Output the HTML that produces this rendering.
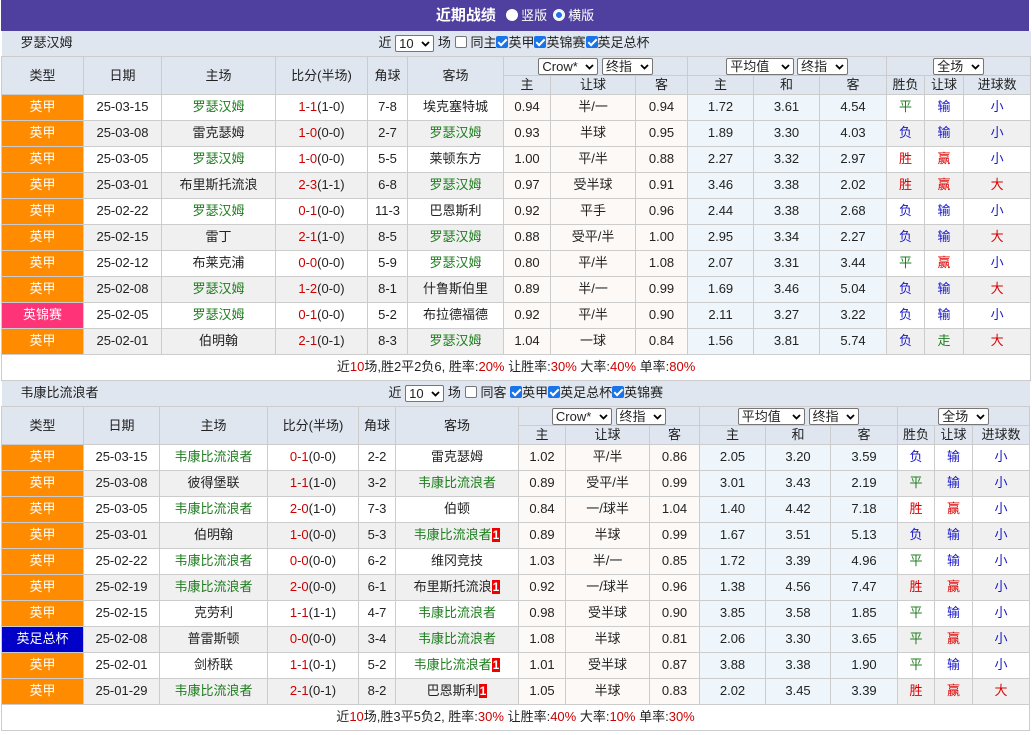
<!DOCTYPE html>
<html><head><meta charset="utf-8">
<style>
*{margin:0;padding:0;box-sizing:border-box}
body{width:1032px;height:735px;background:#fff;font-family:"Liberation Sans","Noto Sans CJK SC",sans-serif;font-size:13px;color:#222;position:relative;overflow:hidden}
.title{position:absolute;left:1px;top:0;width:1028px;height:31px;background:#4f3f9e;color:#fff;font-weight:bold;font-size:15px;text-align:center;line-height:31px}
.title .r{font-weight:normal;font-size:13px}
.rad{display:inline-block;width:12px;height:12px;border-radius:50%;background:#fff;vertical-align:-1px;margin:0 3px 0 6px}
.rad.on{border:1px solid #fff;background:#1a73e8;box-shadow:inset 0 0 0 2px #fff}
table{position:absolute;left:1px;width:1028px;border-collapse:collapse;table-layout:fixed}
td{border:1px solid #ccc;text-align:center;height:26px;padding:0;white-space:nowrap;overflow:hidden;line-height:16px}
.bar td{background:#dfe6ef;border:none;height:25px;text-align:left}
.bar .nm{padding-left:19px}
.hd td{background:#dfe6ef;height:19px;line-height:17px}
tr.g td{background:#f0f0f0}
td.y{color:#fff!important;background:#ff8c00!important}
td.p{color:#fff!important;background:#ff3377!important}
td.b{color:#fff!important;background:#0000c8!important}
tr td.o{background:#fdf9f6}
tr td.a{background:#eef6fb}
.gr{color:#1e7e1e}
.rd{color:#d00}
.bl{color:#1818c8}
.sc{color:#c00}
.rc{background:#e00;color:#fff;font-weight:bold;padding:0 1px;font-size:12px}
.sel{display:inline-block;background:#fff;border:1px solid #767676;border-radius:2px;height:17px;line-height:15px;padding:0 3px;font-size:13px;vertical-align:middle;text-align:left}
.sel svg{vertical-align:1px;margin-left:4px}
.cb{display:inline-block;width:12px;height:12px;border-radius:2px;background:#1a73e8;vertical-align:-1px;position:relative}
.cb:after{content:"";position:absolute;left:4px;top:1px;width:3px;height:7px;border:solid #fff;border-width:0 2px 2px 0;transform:rotate(45deg)}
.cbo{display:inline-block;width:12px;height:12px;border:1px solid #767676;border-radius:2px;background:#fff;vertical-align:-1px;margin-left:4px}
.ft td{height:26px;background:#fff}
</style></head><body>
<div class="title">近期战绩 <span class="r"><span class="rad"></span>竖版<span class="rad on"></span>横版</span></div>

<table style="top:31px">
<colgroup><col style="width:82px"><col style="width:78px"><col style="width:114px"><col style="width:92px"><col style="width:40px"><col style="width:96px"><col style="width:47px"><col style="width:85px"><col style="width:52px"><col style="width:66px"><col style="width:66px"><col style="width:67px"><col style="width:38px"><col style="width:39px"><col style="width:67px"></colgroup>
<tr class="bar"><td colspan="4" class="nm">罗瑟汉姆</td><td colspan="11" style="padding-left:11px">近 <span class="sel">10 <svg width="9" height="6"><path d="M1 1l3.5 3.5L8 1" stroke="#000" stroke-width="1.8" fill="none"/></svg></span> 场<span class="cbo"></span> 同主<span class="cb"></span>英甲<span class="cb"></span>英锦赛<span class="cb"></span>英足总杯</td></tr>
<tr class="hd"><td rowspan="2">类型</td><td rowspan="2">日期</td><td rowspan="2">主场</td><td rowspan="2">比分(半场)</td><td rowspan="2">角球</td><td rowspan="2">客场</td><td colspan="3"><span class="sel">Crow* <svg width="9" height="6"><path d="M1 1l3.5 3.5L8 1" stroke="#000" stroke-width="1.8" fill="none"/></svg></span> <span class="sel">终指 <svg width="9" height="6"><path d="M1 1l3.5 3.5L8 1" stroke="#000" stroke-width="1.8" fill="none"/></svg></span></td><td colspan="3"><span class="sel">平均值 &nbsp;<svg width="9" height="6"><path d="M1 1l3.5 3.5L8 1" stroke="#000" stroke-width="1.8" fill="none"/></svg></span> <span class="sel">终指 <svg width="9" height="6"><path d="M1 1l3.5 3.5L8 1" stroke="#000" stroke-width="1.8" fill="none"/></svg></span></td><td colspan="3"><span class="sel">全场 <svg width="9" height="6"><path d="M1 1l3.5 3.5L8 1" stroke="#000" stroke-width="1.8" fill="none"/></svg></span></td></tr>
<tr class="hd"><td>主</td><td>让球</td><td>客</td><td>主</td><td>和</td><td>客</td><td>胜负</td><td>让球</td><td>进球数</td></tr>
<tr><td class="y">英甲</td><td>25-03-15</td><td class="gr">罗瑟汉姆</td><td><span class="sc">1-1</span>(1-0)</td><td>7-8</td><td>埃克塞特城</td><td class="o">0.94</td><td class="o">半/一</td><td class="o">0.94</td><td class="a">1.72</td><td class="a">3.61</td><td class="a">4.54</td><td class="gr">平</td><td class="bl">输</td><td class="bl">小</td></tr>
<tr class="g"><td class="y">英甲</td><td>25-03-08</td><td>雷克瑟姆</td><td><span class="sc">1-0</span>(0-0)</td><td>2-7</td><td class="gr">罗瑟汉姆</td><td class="o">0.93</td><td class="o">半球</td><td class="o">0.95</td><td class="a">1.89</td><td class="a">3.30</td><td class="a">4.03</td><td class="bl">负</td><td class="bl">输</td><td class="bl">小</td></tr>
<tr><td class="y">英甲</td><td>25-03-05</td><td class="gr">罗瑟汉姆</td><td><span class="sc">1-0</span>(0-0)</td><td>5-5</td><td>莱顿东方</td><td class="o">1.00</td><td class="o">平/半</td><td class="o">0.88</td><td class="a">2.27</td><td class="a">3.32</td><td class="a">2.97</td><td class="rd">胜</td><td class="rd">赢</td><td class="bl">小</td></tr>
<tr class="g"><td class="y">英甲</td><td>25-03-01</td><td>布里斯托流浪</td><td><span class="sc">2-3</span>(1-1)</td><td>6-8</td><td class="gr">罗瑟汉姆</td><td class="o">0.97</td><td class="o">受半球</td><td class="o">0.91</td><td class="a">3.46</td><td class="a">3.38</td><td class="a">2.02</td><td class="rd">胜</td><td class="rd">赢</td><td class="rd">大</td></tr>
<tr><td class="y">英甲</td><td>25-02-22</td><td class="gr">罗瑟汉姆</td><td><span class="sc">0-1</span>(0-0)</td><td>11-3</td><td>巴恩斯利</td><td class="o">0.92</td><td class="o">平手</td><td class="o">0.96</td><td class="a">2.44</td><td class="a">3.38</td><td class="a">2.68</td><td class="bl">负</td><td class="bl">输</td><td class="bl">小</td></tr>
<tr class="g"><td class="y">英甲</td><td>25-02-15</td><td>雷丁</td><td><span class="sc">2-1</span>(1-0)</td><td>8-5</td><td class="gr">罗瑟汉姆</td><td class="o">0.88</td><td class="o">受平/半</td><td class="o">1.00</td><td class="a">2.95</td><td class="a">3.34</td><td class="a">2.27</td><td class="bl">负</td><td class="bl">输</td><td class="rd">大</td></tr>
<tr><td class="y">英甲</td><td>25-02-12</td><td>布莱克浦</td><td><span class="sc">0-0</span>(0-0)</td><td>5-9</td><td class="gr">罗瑟汉姆</td><td class="o">0.80</td><td class="o">平/半</td><td class="o">1.08</td><td class="a">2.07</td><td class="a">3.31</td><td class="a">3.44</td><td class="gr">平</td><td class="rd">赢</td><td class="bl">小</td></tr>
<tr class="g"><td class="y">英甲</td><td>25-02-08</td><td class="gr">罗瑟汉姆</td><td><span class="sc">1-2</span>(0-0)</td><td>8-1</td><td>什鲁斯伯里</td><td class="o">0.89</td><td class="o">半/一</td><td class="o">0.99</td><td class="a">1.69</td><td class="a">3.46</td><td class="a">5.04</td><td class="bl">负</td><td class="bl">输</td><td class="rd">大</td></tr>
<tr><td class="p">英锦赛</td><td>25-02-05</td><td class="gr">罗瑟汉姆</td><td><span class="sc">0-1</span>(0-0)</td><td>5-2</td><td>布拉德福德</td><td class="o">0.92</td><td class="o">平/半</td><td class="o">0.90</td><td class="a">2.11</td><td class="a">3.27</td><td class="a">3.22</td><td class="bl">负</td><td class="bl">输</td><td class="bl">小</td></tr>
<tr class="g"><td class="y">英甲</td><td>25-02-01</td><td>伯明翰</td><td><span class="sc">2-1</span>(0-1)</td><td>8-3</td><td class="gr">罗瑟汉姆</td><td class="o">1.04</td><td class="o">一球</td><td class="o">0.84</td><td class="a">1.56</td><td class="a">3.81</td><td class="a">5.74</td><td class="bl">负</td><td class="gr">走</td><td class="rd">大</td></tr>
<tr class="ft"><td colspan="15">近<span class="sc">10</span>场,胜2平2负6, 胜率:<span class="sc">20%</span> 让胜率:<span class="sc">30%</span> 大率:<span class="sc">40%</span> 单率:<span class="sc">80%</span></td></tr>
</table>

<table style="top:381px">
<colgroup><col style="width:82px"><col style="width:76px"><col style="width:108px"><col style="width:91px"><col style="width:37px"><col style="width:123px"><col style="width:47px"><col style="width:84px"><col style="width:50px"><col style="width:66px"><col style="width:65px"><col style="width:67px"><col style="width:37px"><col style="width:38px"><col style="width:57px"></colgroup>
<tr class="bar"><td colspan="4" class="nm" style="height:24px">韦康比流浪者</td><td colspan="11" style="padding-left:30px">近 <span class="sel">10 <svg width="9" height="6"><path d="M1 1l3.5 3.5L8 1" stroke="#000" stroke-width="1.8" fill="none"/></svg></span> 场<span class="cbo"></span> 同客 <span class="cb"></span>英甲<span class="cb"></span>英足总杯<span class="cb"></span>英锦赛</td></tr>
<tr class="hd"><td rowspan="2">类型</td><td rowspan="2">日期</td><td rowspan="2">主场</td><td rowspan="2">比分(半场)</td><td rowspan="2">角球</td><td rowspan="2">客场</td><td colspan="3"><span class="sel">Crow* <svg width="9" height="6"><path d="M1 1l3.5 3.5L8 1" stroke="#000" stroke-width="1.8" fill="none"/></svg></span> <span class="sel">终指 <svg width="9" height="6"><path d="M1 1l3.5 3.5L8 1" stroke="#000" stroke-width="1.8" fill="none"/></svg></span></td><td colspan="3"><span class="sel">平均值 &nbsp;<svg width="9" height="6"><path d="M1 1l3.5 3.5L8 1" stroke="#000" stroke-width="1.8" fill="none"/></svg></span> <span class="sel">终指 <svg width="9" height="6"><path d="M1 1l3.5 3.5L8 1" stroke="#000" stroke-width="1.8" fill="none"/></svg></span></td><td colspan="3"><span class="sel">全场 <svg width="9" height="6"><path d="M1 1l3.5 3.5L8 1" stroke="#000" stroke-width="1.8" fill="none"/></svg></span></td></tr>
<tr class="hd"><td>主</td><td>让球</td><td>客</td><td>主</td><td>和</td><td>客</td><td>胜负</td><td>让球</td><td>进球数</td></tr>
<tr><td class="y">英甲</td><td>25-03-15</td><td class="gr">韦康比流浪者</td><td><span class="sc">0-1</span>(0-0)</td><td>2-2</td><td>雷克瑟姆</td><td class="o">1.02</td><td class="o">平/半</td><td class="o">0.86</td><td class="a">2.05</td><td class="a">3.20</td><td class="a">3.59</td><td class="bl">负</td><td class="bl">输</td><td class="bl">小</td></tr>
<tr class="g"><td class="y">英甲</td><td>25-03-08</td><td>彼得堡联</td><td><span class="sc">1-1</span>(1-0)</td><td>3-2</td><td class="gr">韦康比流浪者</td><td class="o">0.89</td><td class="o">受平/半</td><td class="o">0.99</td><td class="a">3.01</td><td class="a">3.43</td><td class="a">2.19</td><td class="gr">平</td><td class="bl">输</td><td class="bl">小</td></tr>
<tr><td class="y">英甲</td><td>25-03-05</td><td class="gr">韦康比流浪者</td><td><span class="sc">2-0</span>(1-0)</td><td>7-3</td><td>伯顿</td><td class="o">0.84</td><td class="o">一/球半</td><td class="o">1.04</td><td class="a">1.40</td><td class="a">4.42</td><td class="a">7.18</td><td class="rd">胜</td><td class="rd">赢</td><td class="bl">小</td></tr>
<tr class="g"><td class="y">英甲</td><td>25-03-01</td><td>伯明翰</td><td><span class="sc">1-0</span>(0-0)</td><td>5-3</td><td class="gr">韦康比流浪者<span class="rc">1</span></td><td class="o">0.89</td><td class="o">半球</td><td class="o">0.99</td><td class="a">1.67</td><td class="a">3.51</td><td class="a">5.13</td><td class="bl">负</td><td class="bl">输</td><td class="bl">小</td></tr>
<tr><td class="y">英甲</td><td>25-02-22</td><td class="gr">韦康比流浪者</td><td><span class="sc">0-0</span>(0-0)</td><td>6-2</td><td>维冈竞技</td><td class="o">1.03</td><td class="o">半/一</td><td class="o">0.85</td><td class="a">1.72</td><td class="a">3.39</td><td class="a">4.96</td><td class="gr">平</td><td class="bl">输</td><td class="bl">小</td></tr>
<tr class="g"><td class="y">英甲</td><td>25-02-19</td><td class="gr">韦康比流浪者</td><td><span class="sc">2-0</span>(0-0)</td><td>6-1</td><td>布里斯托流浪<span class="rc">1</span></td><td class="o">0.92</td><td class="o">一/球半</td><td class="o">0.96</td><td class="a">1.38</td><td class="a">4.56</td><td class="a">7.47</td><td class="rd">胜</td><td class="rd">赢</td><td class="bl">小</td></tr>
<tr><td class="y">英甲</td><td>25-02-15</td><td>克劳利</td><td><span class="sc">1-1</span>(1-1)</td><td>4-7</td><td class="gr">韦康比流浪者</td><td class="o">0.98</td><td class="o">受半球</td><td class="o">0.90</td><td class="a">3.85</td><td class="a">3.58</td><td class="a">1.85</td><td class="gr">平</td><td class="bl">输</td><td class="bl">小</td></tr>
<tr class="g"><td class="b">英足总杯</td><td>25-02-08</td><td>普雷斯顿</td><td><span class="sc">0-0</span>(0-0)</td><td>3-4</td><td class="gr">韦康比流浪者</td><td class="o">1.08</td><td class="o">半球</td><td class="o">0.81</td><td class="a">2.06</td><td class="a">3.30</td><td class="a">3.65</td><td class="gr">平</td><td class="rd">赢</td><td class="bl">小</td></tr>
<tr><td class="y">英甲</td><td>25-02-01</td><td>剑桥联</td><td><span class="sc">1-1</span>(0-1)</td><td>5-2</td><td class="gr">韦康比流浪者<span class="rc">1</span></td><td class="o">1.01</td><td class="o">受半球</td><td class="o">0.87</td><td class="a">3.88</td><td class="a">3.38</td><td class="a">1.90</td><td class="gr">平</td><td class="bl">输</td><td class="bl">小</td></tr>
<tr class="g"><td class="y">英甲</td><td>25-01-29</td><td class="gr">韦康比流浪者</td><td><span class="sc">2-1</span>(0-1)</td><td>8-2</td><td>巴恩斯利<span class="rc">1</span></td><td class="o">1.05</td><td class="o">半球</td><td class="o">0.83</td><td class="a">2.02</td><td class="a">3.45</td><td class="a">3.39</td><td class="rd">胜</td><td class="rd">赢</td><td class="rd">大</td></tr>
<tr class="ft"><td colspan="15">近<span class="sc">10</span>场,胜3平5负2, 胜率:<span class="sc">30%</span> 让胜率:<span class="sc">40%</span> 大率:<span class="sc">10%</span> 单率:<span class="sc">30%</span></td></tr>
</table>
</body></html>
